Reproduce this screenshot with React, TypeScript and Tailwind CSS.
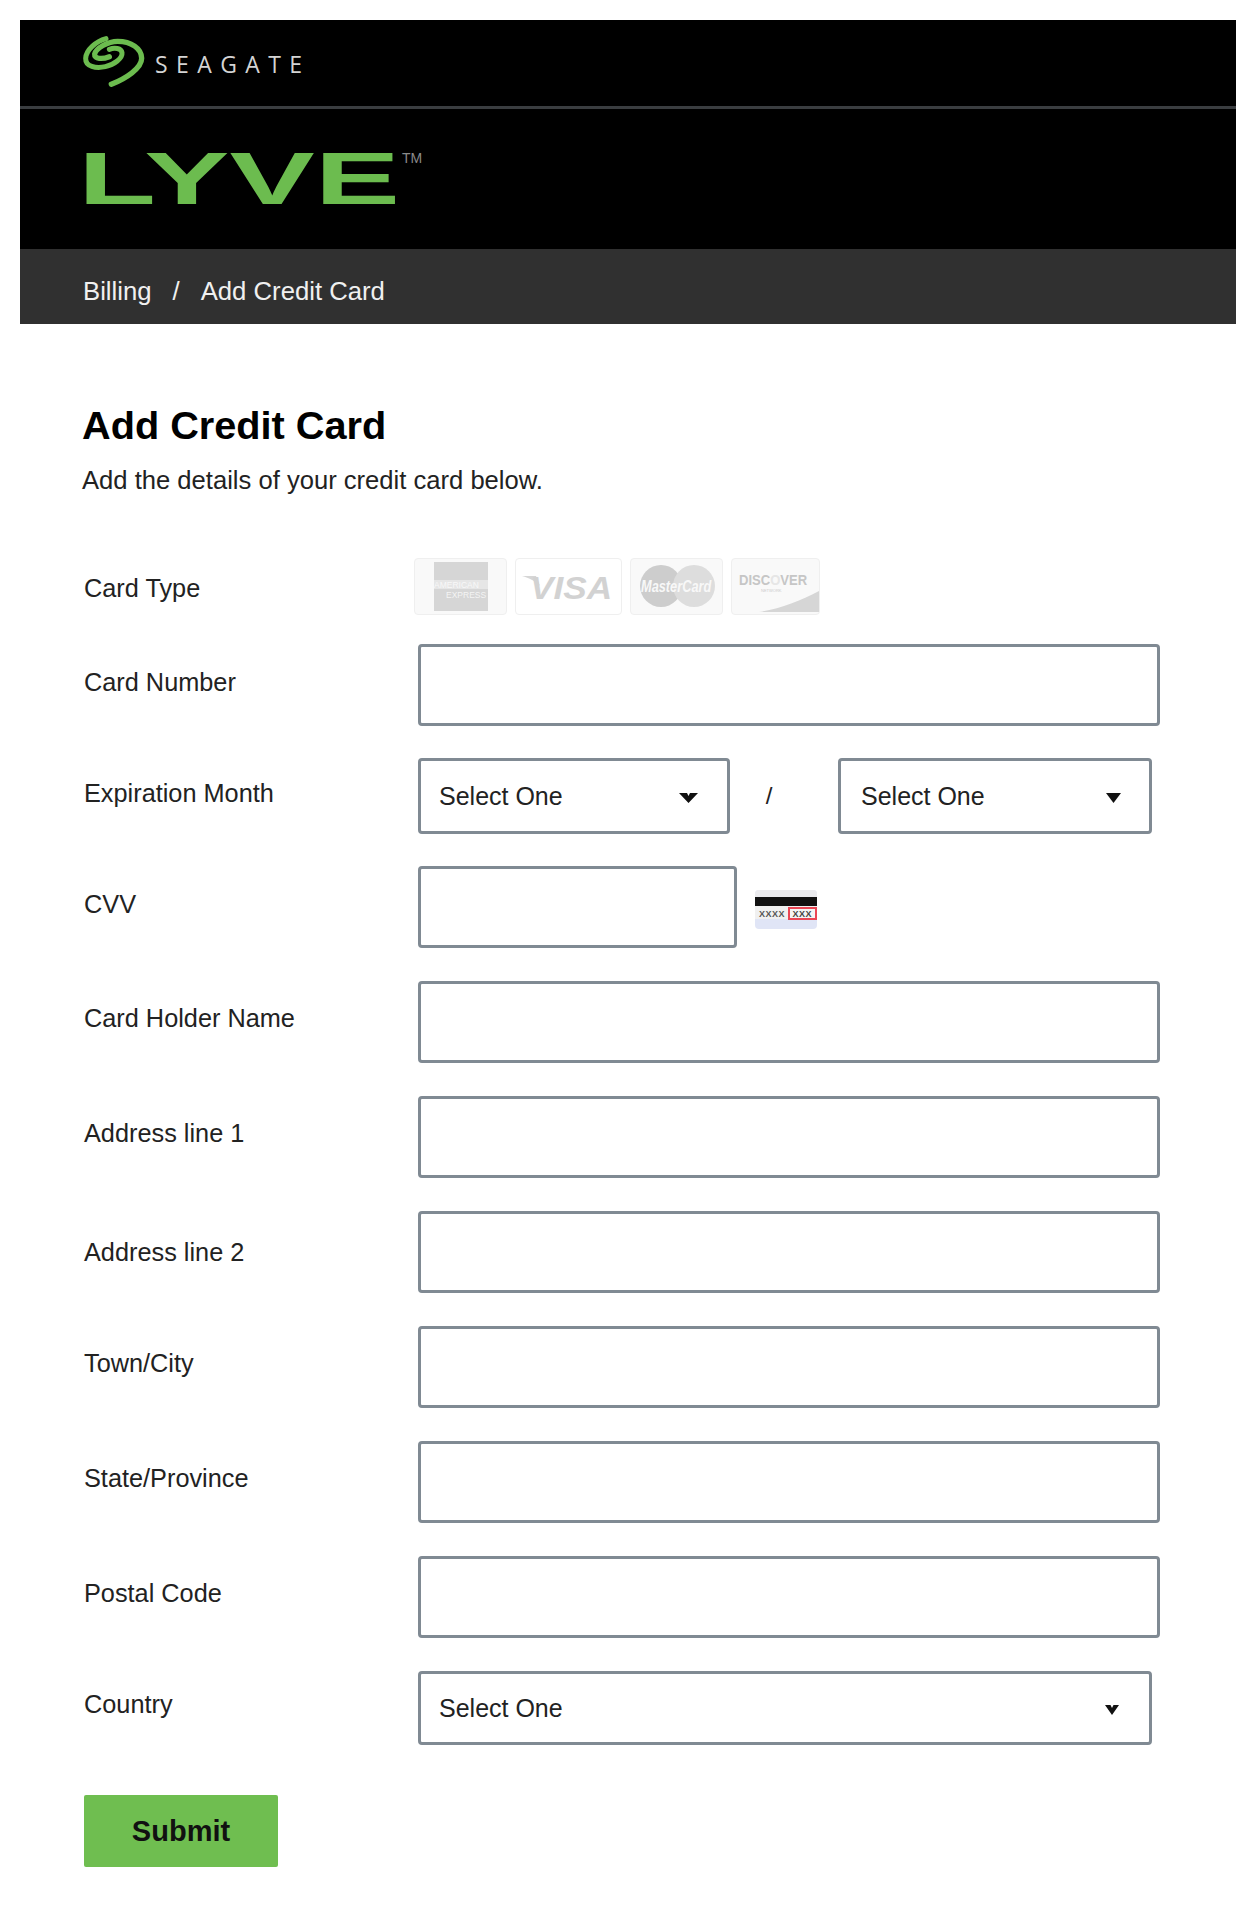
const font = { fontFamily: '"Liberation Sans", Arial, sans-serif' };

function SeagateLogo() {
  return (
    <svg width="80" height="64" viewBox="0 0 240 192" fill="none" stroke="#6cbc4f" strokeLinecap="round" className="shrink-0">
      <path d="M90 26 C60 34 30 60 29 85 C28 110 60 116 88 110 C115 104 140 85 138 68 C136 54 115 52 100 58" strokeWidth="15" />
      <path d="M106 163 C150 145 197 115 197 85 C197 55 165 34 125 34 C95 34 60 55 56 72 C54 88 80 88 100 80" strokeWidth="16" />
    </svg>
  );
}

function CardIcons() {
  const svgFont = "Liberation Sans";
  return (
    <div className="flex gap-[8px] -ml-[4px]">
      <div className="w-[93px] h-[57px] shrink-0 rounded-[4px] border border-[#efefef] bg-[#f9f9f9] flex items-center justify-center">
        <svg width="54" height="49" viewBox="0 0 54 49">
          <rect width="54" height="49" fill="#d6d6d6" />
          <rect y="18" width="54" height="9" fill="#e6e6e6" />
          <text x="0" y="26" fontSize="8.5" fill="#f8f8f8" fontFamily={svgFont}>AMERICAN</text>
          <text x="12" y="36" fontSize="8.5" fill="#f4f4f4" fontFamily={svgFont}>EXPRESS</text>
        </svg>
      </div>
      <div className="w-[107px] h-[57px] shrink-0 rounded-[4px] border border-[#efefef] bg-white flex items-center justify-center">
        <svg width="105" height="55" viewBox="0 0 105 55">
          <path d="M6 17 H20 L24 27 C20 22 13 19 6 17 Z" fill="#d6d6d6" />
          <text transform="translate(14 40) scale(1.1 1)" fontSize="32" fontWeight="700" fontStyle="italic" fill="#d2d2d2" fontFamily={svgFont}>VISA</text>
        </svg>
      </div>
      <div className="w-[93px] h-[57px] shrink-0 rounded-[4px] border border-[#efefef] bg-[#f9f9f9]">
        <svg width="91" height="55" viewBox="0 0 91 55">
          <circle cx="30" cy="27" r="21" fill="#cdcdcd" />
          <circle cx="63" cy="27" r="21" fill="#dddddd" />
          <text transform="translate(10 33) scale(0.8 1)" fontSize="16" fontWeight="700" fontStyle="italic" fill="#f8f8f8" fontFamily={svgFont}>MasterCard</text>
        </svg>
      </div>
      <div className="w-[89px] h-[57px] shrink-0 rounded-[4px] border border-[#efefef] bg-[#f9f9f9]">
        <svg width="87" height="55" viewBox="0 0 87 55">
          <text transform="translate(7 26) scale(0.87 1)" fontSize="15" fontWeight="700" fill="#c6c6c6" fontFamily={svgFont}>
            DISC<tspan fill="#e6e6e6">O</tspan>VER
          </text>
          <text x="29" y="33" fontSize="4" fill="#cccccc" fontFamily={svgFont}>NETWORK</text>
          <path d="M27 53 C48 50 68 42 87 32 V53 Z" fill="#d6d6d6" />
        </svg>
      </div>
    </div>
  );
}

function CvvIcon() {
  return (
    <svg width="62" height="39" viewBox="0 0 62 39" className="ml-[18px] mt-[24px] shrink-0">
      <rect width="62" height="39" rx="4" fill="#e0e5f6" />
      <path d="M0 7 V4 Q0 0 4 0 H58 Q62 0 62 4 V7 Z" fill="#ebebee" />
      <rect y="7" width="62" height="9" fill="#111" />
      <rect y="16" width="62" height="13" fill="#f0f0f0" />
      <text x="4" y="26.5" fontSize="9" fontWeight="700" fill="#555" fontFamily="Liberation Sans" letterSpacing="0.5">XXXX</text>
      <rect x="34" y="18" width="27" height="11" fill="#f4f4f4" stroke="#ea4655" strokeWidth="2" />
      <text x="37.5" y="27" fontSize="9" fontWeight="700" fill="#444" fontFamily="Liberation Sans" letterSpacing="0.5">XXX</text>
    </svg>
  );
}

function Caret({ w, notch }: { w: number; notch: boolean }) {
  const mid = w / 2;
  const d = notch
    ? `M0 0 H${mid - 1.5} L${mid} 3 L${mid + 1.5} 0 H${w} L${mid} 10 Z`
    : `M0 0 H${w} L${mid} 10 Z`;
  return (
    <svg width={w} height="10" viewBox={`0 0 ${w} 10`} className="shrink-0 mt-[3px]">
      <path d={d} fill="#111" />
    </svg>
  );
}

function SelectBox({ box, caretW, notch }: { box: string; caretW: number; notch: boolean }) {
  return (
    <div className={`${box} shrink-0 rounded-[4px] border-[3px] border-[#808a93] bg-white flex items-center justify-between text-[25px] text-[#222]`}>
      <span className="mt-[2px]">Select One</span>
      <Caret w={caretW} notch={notch} />
    </div>
  );
}

function TextBox({ w }: { w: string }) {
  return <input type="text" className={`${w} h-[82px] shrink-0 rounded-[4px] border-[3px] border-[#808a93] bg-white`} />;
}

function Row({ label, top, mb, children }: { label: string; top: string; mb: string; children: React.ReactNode }) {
  return (
    <div className={`flex items-start ${mb}`}>
      <label className={`w-[334px] shrink-0 text-[25.3px] leading-[30px] text-[#222] ${top}`}>{label}</label>
      {children}
    </div>
  );
}

export default function App() {
  return (
    <div className="min-h-[1916px] bg-white pt-[20px] pl-[20px] overflow-hidden" style={font}>
      <header>
        <div className="bg-black h-[86px] flex items-start pl-[56px] pt-[10px]">
          <SeagateLogo />
          <span
            className="self-center -ml-[1px] -mt-[8px] text-[23px] leading-none tracking-[8.4px] text-[#d4d4d4]"
            style={{ fontFamily: '"Open Sans", sans-serif' }}
          >
            SEAGATE
          </span>
        </div>
        <div className="h-[3px] bg-[#3a3d40]" />
        <div className="bg-black h-[140px] pl-[58px] pt-[20px] flex items-start">
          <svg width="350" height="92" viewBox="0 0 350 92">
            <text x="0" y="75" fontSize="75" fontWeight="700" fill="#6cbc4f" fontFamily="Liberation Sans" textLength="322" lengthAdjust="spacingAndGlyphs">LYVE</text>
            <text x="324" y="34" fontSize="14" fill="#8a8a8a" fontFamily="Liberation Sans">TM</text>
          </svg>
        </div>
        <nav className="bg-[#303030] h-[75px] pl-[63px] pt-[10px] flex items-center text-[25.7px] text-[#f0f0f0]">
          <span>Billing</span>
          <span className="mx-[21px]">/</span>
          <span>Add Credit Card</span>
        </nav>
      </header>

      <main className="pl-[62px] pt-[78px]">
        <h1 className="text-[39.7px] leading-[46px] font-bold text-black">Add Credit Card</h1>
        <p className="mt-[17px] text-[25.6px] leading-[30px] text-[#222]">Add the details of your credit card below.</p>

        <form className="mt-[63px] pl-[2px]">
          <Row label="Card Type" top="pt-[15px]" mb="mb-[29px]"><CardIcons /></Row>
          <Row label="Card Number" top="pt-[23px]" mb="mb-[32px]"><TextBox w="w-[742px]" /></Row>
          <Row label="Expiration Month" top="pt-[20px]" mb="mb-[32px]">
            <SelectBox box="w-[312px] h-[76px] pl-[18px] pr-[29px]" caretW={19} notch={true} />
            <span className="w-[108px] shrink-0 text-center text-[24px] leading-[76px] text-[#222] pr-[30px]">/</span>
            <SelectBox box="w-[314px] h-[76px] pl-[20px] pr-[28px]" caretW={15} notch={false} />
          </Row>
          <Row label="CVV" top="pt-[23px]" mb="mb-[33px]"><TextBox w="w-[319px]" /><CvvIcon /></Row>
          <Row label="Card Holder Name" top="pt-[22px]" mb="mb-[33px]"><TextBox w="w-[742px]" /></Row>
          <Row label="Address line 1" top="pt-[22px]" mb="mb-[33px]"><TextBox w="w-[742px]" /></Row>
          <Row label="Address line 2" top="pt-[26px]" mb="mb-[33px]"><TextBox w="w-[742px]" /></Row>
          <Row label="Town/City" top="pt-[22px]" mb="mb-[33px]"><TextBox w="w-[742px]" /></Row>
          <Row label="State/Province" top="pt-[22px]" mb="mb-[33px]"><TextBox w="w-[742px]" /></Row>
          <Row label="Postal Code" top="pt-[22px]" mb="mb-[33px]"><TextBox w="w-[742px]" /></Row>
          <Row label="Country" top="pt-[18px]" mb="mb-[50px]">
            <SelectBox box="w-[734px] h-[74px] pl-[18px] pr-[30px]" caretW={14} notch={true} />
          </Row>
          <button type="button" className="block w-[194px] h-[72px] rounded-[2px] bg-[#6fbe50] pt-[2px] text-[29px] font-bold text-[#111]">Submit</button>
        </form>
      </main>
    </div>
  );
}
